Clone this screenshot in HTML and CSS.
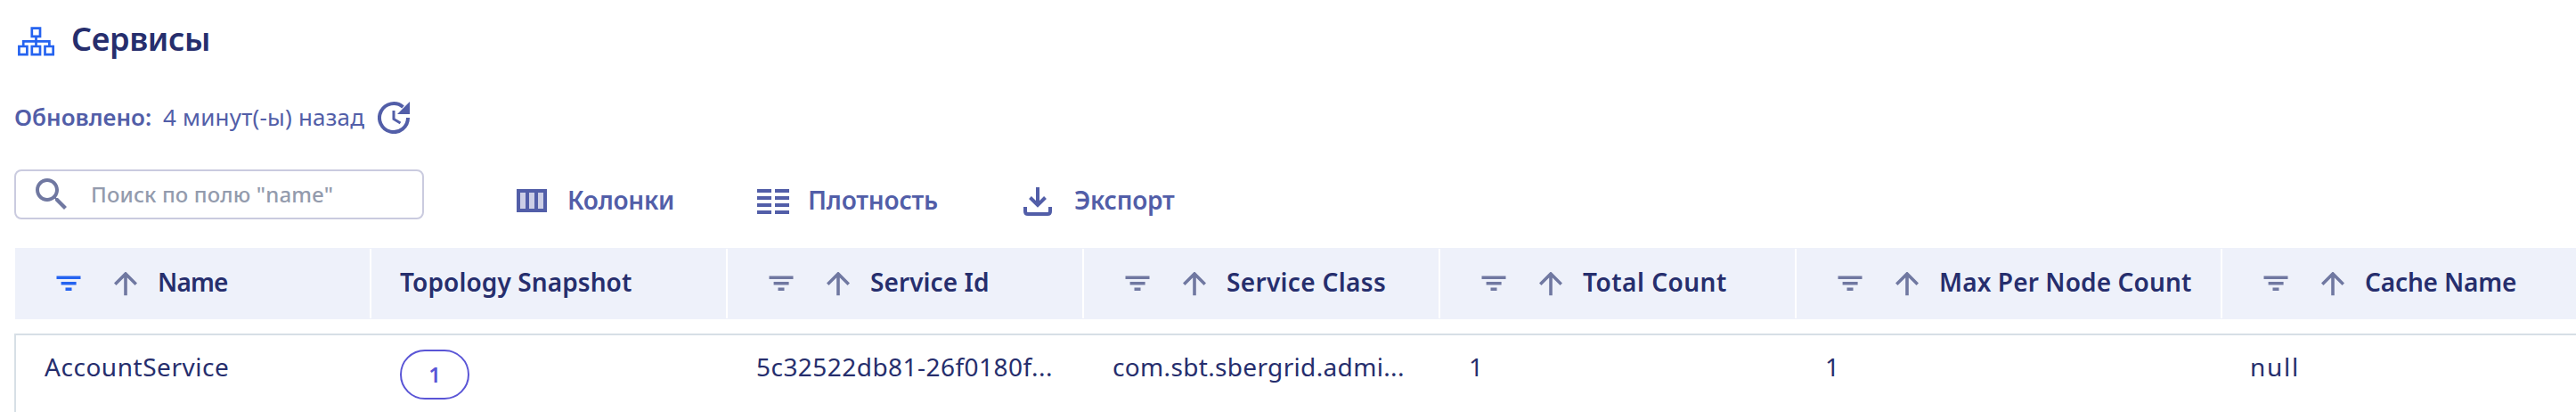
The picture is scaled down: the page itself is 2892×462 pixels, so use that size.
FILE: index.html
```html
<!DOCTYPE html>
<html lang="ru">
<head>
<meta charset="utf-8">
<title>Сервисы</title>
<link rel="stylesheet" href="styles.css">
</head>
<body>
<svg class="sprite" width="0" height="0">
  <symbol id="filter" viewBox="0 0 28 18"><path d="M.5.5h27v3.6H.5zM5.6 7h17v3.6h-17zM10.5 13.5h7v3.6h-7z" fill="currentColor"/></symbol>
  <symbol id="arrow" viewBox="0 0 26 27"><path d="M13 26.3V2M1.2 13.8 13 2l11.8 11.8" fill="none" stroke="currentColor" stroke-width="3.6"/></symbol>
</svg>
<header class="title">
  <svg class="title-icon" width="42" height="34" viewBox="0 0 42 34" fill="none" stroke="currentColor" stroke-width="2.7"><path d="M15.8 1.7h9.2v9.2h-9.2zM1.4 22h9v9.2h-9zM15.8 22h9.2v9.2h-9.2zM30.5 22h9.2v9.2h-9.2zM20.5 11v11M6.2 22v-5.600h29.200V22"/></svg>
  <h1 class="title-text">Сервисы</h1>
</header>
<div class="updated">
  <span class="updated-label">Обновлено:</span>
  <span class="updated-value">4 минут(-ы) назад</span>
  <svg class="updated-icon" width="36" height="36" viewBox="0 0 36 36"><path d="M34 18A16 16 0 1 1 28.500 6" fill="none" stroke="currentColor" stroke-width="4"/><path d="M18 10v9.500l7.500 4.500" fill="none" stroke="currentColor" stroke-width="3"/><path d="M36 0v14H22z" fill="currentColor"/></svg>
</div>
<div class="toolbar">
  <div class="search">
    <svg class="search-icon" width="48" height="48" viewBox="0 0 24 24"><path fill="currentColor" d="M15.5 14h-.79l-.28-.27C15.41 12.59 16 11.11 16 9.5 16 5.91 13.09 3 9.5 3S3 5.91 3 9.5 5.91 16 9.5 16c1.61 0 3.09-.59 4.23-1.57l.27.28v.79l5 4.99L20.49 19l-4.99-5zm-6 0C7.01 14 5 11.99 5 9.5S7.01 5 9.5 5 14 7.01 14 9.5 11.99 14 9.5 14z"/></svg>
    <span class="placeholder">Поиск по полю "name"</span>
  </div>
  <div class="actions">
    <div class="action columns"><svg width="36" height="36" viewBox="0 0 36 36"><path fill="#cccee6" d="M2 6h30v22H2z"/><path fill="none" stroke="currentColor" stroke-width="4" d="M2 7h30v22H2zM12 7v22M22 7v22"/></svg><span>Колонки</span></div>
    <div class="action density"><svg width="36" height="36" viewBox="0 0 36 36"><path fill="currentColor" d="M0 5h16v4H0zM20 5h16v4H20zM0 13h16v4H0zM20 13h16v4H20zM0 21h16v4H0zM20 21h16v4H20zM0 29h16v4H0zM20 29h16v4H20z"/></svg><span>Плотность</span></div>
    <div class="action export"><svg width="36" height="36" viewBox="0 0 36 36"><path fill="none" stroke="currentColor" stroke-width="4" d="M18 3v20M9.5 14.5 18 23l8.500-8.500M4 25v5q0 3 3 3h22q3 0 3-3v-5"/></svg><span>Экспорт</span></div>
  </div>
</div>
<div class="grid head">
  <div class="cell name"><svg class="filter active"><use href="#filter"/></svg><svg class="arrow"><use href="#arrow"/></svg><span>Name</span></div>
  <div class="cell snapshot"><span>Topology Snapshot</span></div>
  <div class="cell id"><svg class="filter"><use href="#filter"/></svg><svg class="arrow"><use href="#arrow"/></svg><span>Service Id</span></div>
  <div class="cell class"><svg class="filter"><use href="#filter"/></svg><svg class="arrow"><use href="#arrow"/></svg><span>Service Class</span></div>
  <div class="cell total"><svg class="filter"><use href="#filter"/></svg><svg class="arrow"><use href="#arrow"/></svg><span>Total Count</span></div>
  <div class="cell max"><svg class="filter"><use href="#filter"/></svg><svg class="arrow"><use href="#arrow"/></svg><span>Max Per Node Count</span></div>
  <div class="cell cache"><svg class="filter"><use href="#filter"/></svg><svg class="arrow"><use href="#arrow"/></svg><span>Cache Name</span></div>
</div>
<div class="grid row">
  <div class="value account">AccountService</div>
  <div class="value"><span class="pill">1</span></div>
  <div class="value uuid">5c32522db81-26f0180f...</div>
  <div class="value package">com.sbt.sbergrid.admi...</div>
  <div class="value">1</div>
  <div class="value">1</div>
  <div class="value empty">null</div>
</div>
</body>
</html>
```
FILE: styles.css
```css
* { box-sizing: border-box; }
body {
  margin: 0;
  height: 462px;
  overflow: hidden;
  background: #fff;
  color: #262e6d;
  font: 400 28px/40px "Noto Sans", sans-serif;
}
svg { display: block; flex: none; }
.sprite { position: absolute; }

.title { display: flex; align-items: flex-start; height: 92px; padding: 19px 0 0 20px; }
.title-icon { margin-top: 11px; color: #2563f0; }
.title-text { margin: 0 0 0 18px; font-size: 36px; line-height: 50px; font-weight: 600; letter-spacing: -0.37px; }

.updated { display: flex; height: 98px; padding: 19px 0 0 16px; font-size: 26px; color: #525ea8; }
.updated-label { width: 167px; font-weight: 600; }
.updated-value { width: 241px; letter-spacing: 0.2px; }
.updated-icon { margin-top: 3px; }

.toolbar { display: flex; height: 88px; padding-left: 16px; }
.search { display: flex; width: 460px; height: 56px; padding: 2px 0 0 16px; border: 2px solid #cacbdf; border-radius: 8px; }
.search-icon { color: #7078a1; }
.placeholder { margin-left: 20px; padding-top: 4px; font-size: 24px; line-height: 40px; font-weight: 500; letter-spacing: 0.12px; color: #939bad; }
.actions { display: flex; padding: 14px 0 0 104px; color: #525ea8; font-weight: 600; }
.action { display: flex; }
.action svg { margin-top: 3px; }
.action span { margin-left: 21px; }
.columns { width: 270px; letter-spacing: -0.28px; }
.density { width: 297px; letter-spacing: -0.21px; }
.export { letter-spacing: -0.24px; }
.export span { margin-left: 23px; }

.grid { display: grid; grid-template-columns: repeat(5, 400px) 478px 400px; }
.head { margin-left: 17px; height: 80px; background: #eef1fa; }
.cell { position: relative; display: flex; align-items: flex-start; padding: 18px 0 0 46px; font-weight: 600; white-space: nowrap; }
.cell:not(:last-child)::after { content: ""; position: absolute; top: 1px; right: 0; bottom: 1px; width: 2px; background: #fff; }
.filter { width: 28px; height: 18px; margin: 13px 37px 0 0; color: #7078a1; }
.filter.active { color: #2563f0; }
.arrow { width: 26px; height: 27px; margin: 9px 23px 0 0; color: #7078a1; }
.name { letter-spacing: -0.82px; }
.snapshot { padding-left: 32px; letter-spacing: 0.09px; }
.id { letter-spacing: 0.08px; }
.class { letter-spacing: 0.34px; }
.total { letter-spacing: 0.49px; }
.max { letter-spacing: 0.12px; }
.cache { letter-spacing: -0.14px; }

.row { margin: 16px 0 0 16px; height: 100px; border: solid #d7dfe6; border-width: 2px 0 0 2px; }
.value { padding: 15px 0 0 31px; white-space: nowrap; }
.account { padding-left: 32px; letter-spacing: 0.54px; }
.uuid { letter-spacing: 0.46px; }
.package { letter-spacing: 0.34px; }
.empty { letter-spacing: 1.72px; padding-left: 30px; }
.pill { display: flex; align-items: center; justify-content: center; width: 78px; height: 56px; margin-top: 1px; border: 2px solid #5a55d6; border-radius: 28px; font-size: 24px; font-weight: 600; color: #5a55d6; }
```
